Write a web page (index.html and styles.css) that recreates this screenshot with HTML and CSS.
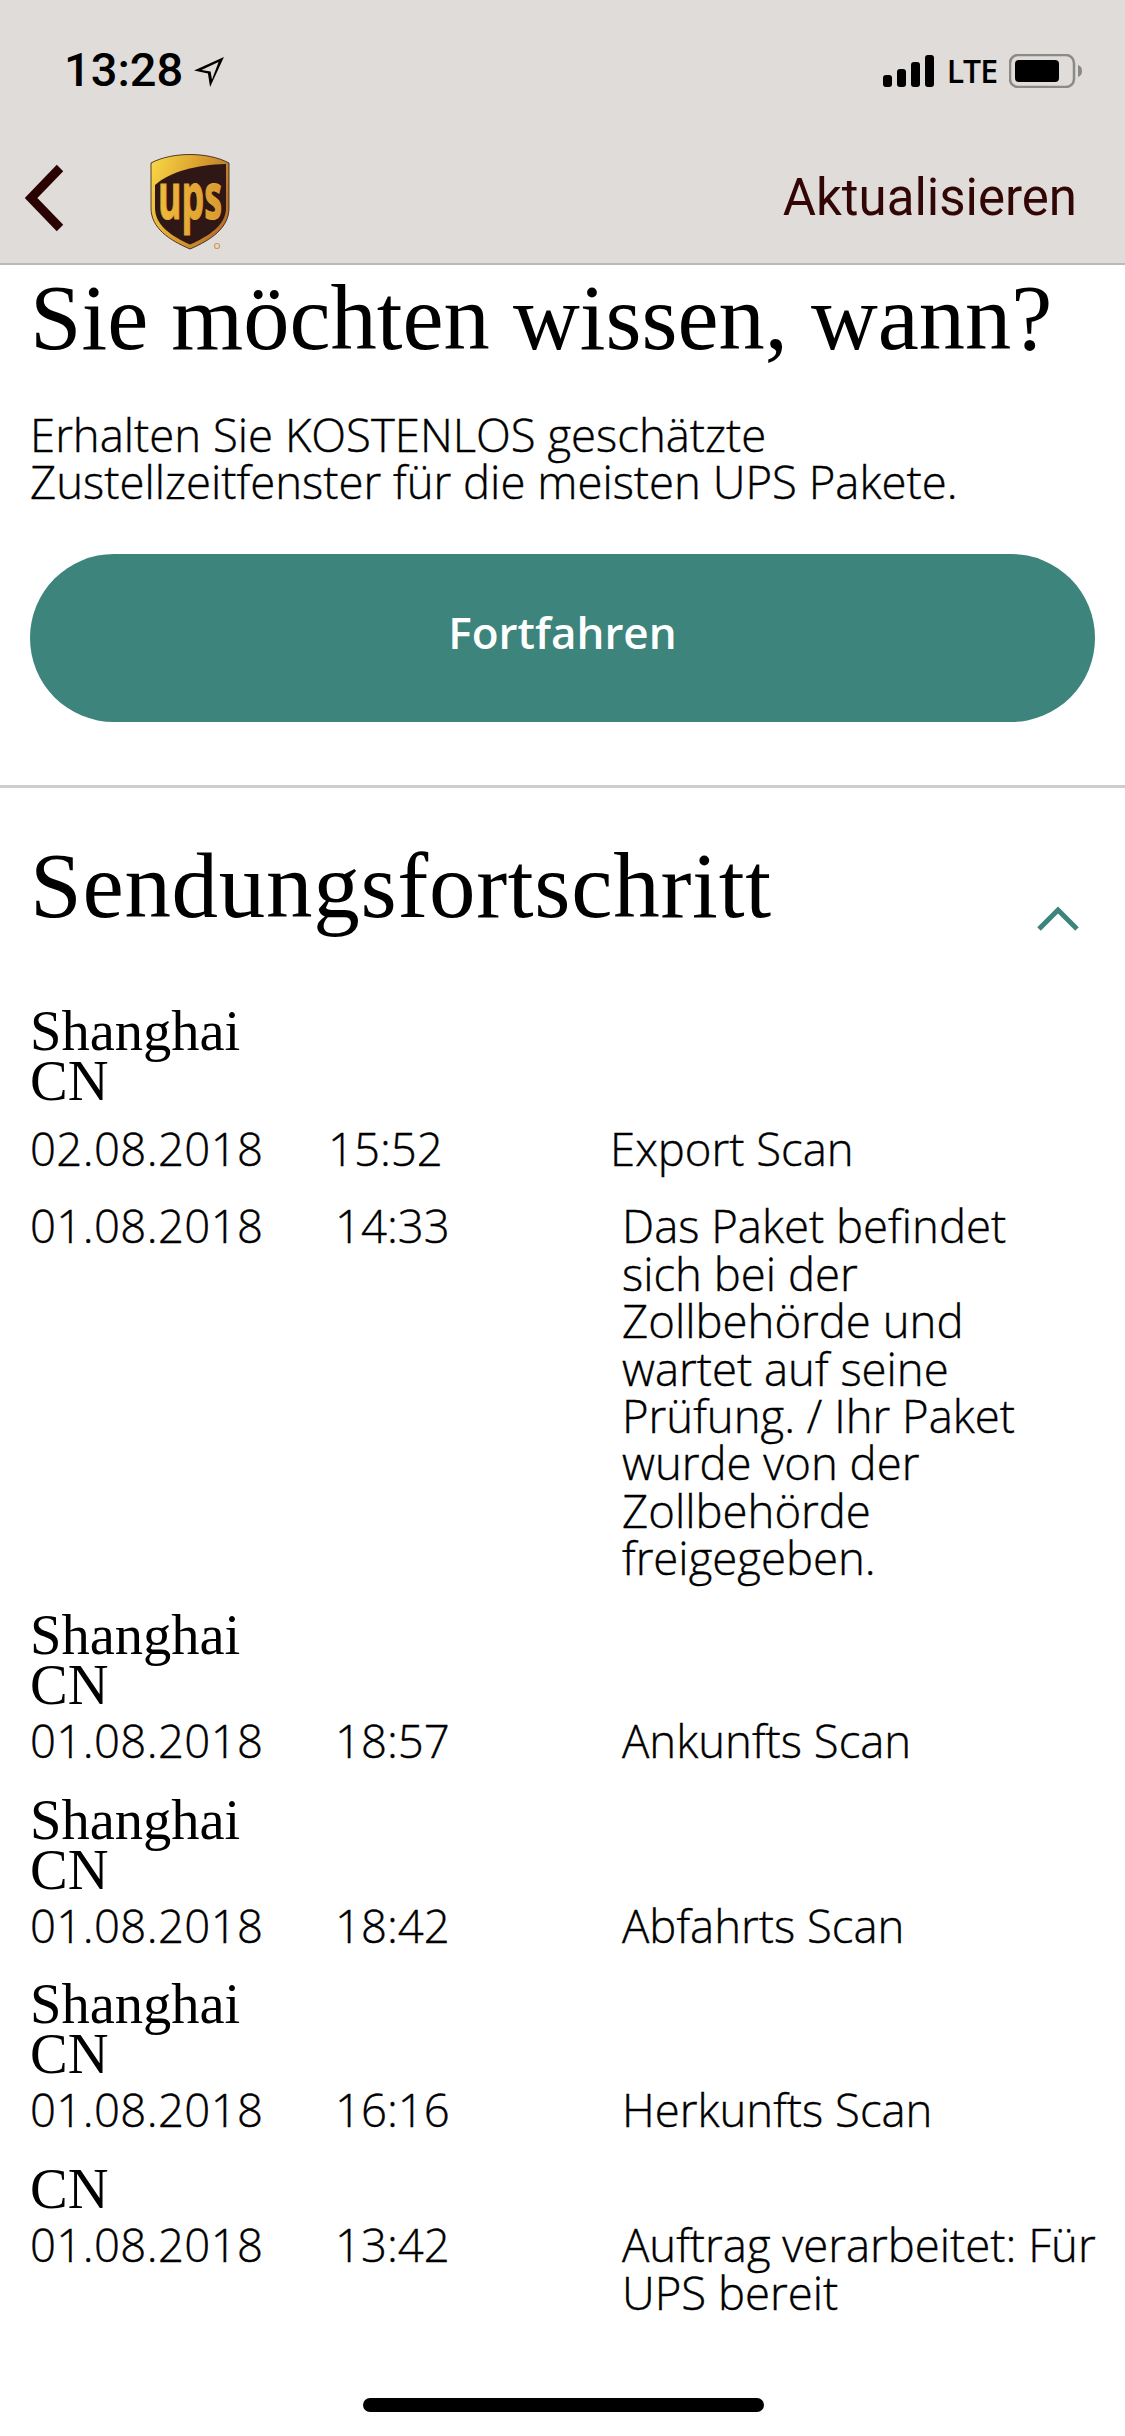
FILE: index.html
```html
<!DOCTYPE html>
<html lang="de">
<head>
  <meta charset="UTF-8" />
  <title>UPS Sendungsverfolgung</title>
  <link rel="stylesheet" href="styles.css">
</head>
<body>

  <header class="topbar">
    <div class="status">
      <div class="status-left">
        <span class="clock">13:28</span>
        <svg class="arrow" viewBox="0 0 30 32" width="32" height="32" preserveAspectRatio="none"><path d="M29 1 L1 14.500 L14 17.500 L16 31 Z M24 6 L8 14 L16.500 15.500 L17.800 23.500 Z" fill="#000" fill-rule="evenodd"/></svg>
      </div>
      <div class="status-right">
        <svg class="signal" viewBox="0 0 52 32" width="52" height="32">
          <rect x="0" y="20" width="9" height="12" rx="3"/>
          <rect x="14" y="14" width="9" height="18" rx="3"/>
          <rect x="28" y="7" width="9" height="25" rx="3"/>
          <rect x="42" y="0" width="9" height="32" rx="3"/>
        </svg>
        <span class="lte">LTE</span>
        <svg class="battery" viewBox="0 0 74 34" width="74" height="34">
          <rect x="1" y="1" width="64" height="32" rx="8" fill="none" stroke="#8a8a86" stroke-width="2.500"/>
          <rect x="6" y="6" width="44" height="22" rx="4" fill="#000"/>
          <path d="M69 11 C72 12 73 14 73 17 C73 20 72 22 69 23 Z" fill="#8a8a86"/>
        </svg>
      </div>
    </div>
    <nav class="navbar">
      <div class="nav-left">
        <svg class="back" viewBox="0 0 40 68" width="40" height="68"><path d="M35 4 L6 34 L35 64" fill="none" stroke="#2b0202" stroke-width="9"/></svg>
        <svg class="logo" viewBox="0 0 80 96" width="80" height="96">
          <defs>
            <linearGradient id="rim" x1="0" y1="0" x2="1" y2="0.400">
              <stop offset="0" stop-color="#fada47"/>
              <stop offset="0.550" stop-color="#dca12f"/>
              <stop offset="1" stop-color="#b8752a"/>
            </linearGradient>
            <linearGradient id="letters" x1="0" y1="0" x2="1" y2="0">
              <stop offset="0" stop-color="#f0bb3c"/>
              <stop offset="1" stop-color="#d99a32"/>
            </linearGradient>
          </defs>
          <path d="M1 9 C12 3 27 0.500 40 0.500 C53 0.500 68 3 79 9 V54 C79 74 61 86 40 95 C19 86 1 74 1 54 Z" fill="url(#rim)" stroke="#2a1410" stroke-width="0.800"/>
          <path d="M5 31 C21 17 46 11 76 10 V54 C76 71 59 82 40 90.500 C21 82 5 71 5 54 Z" fill="#2e1714"/>
          <text class="logo-text" x="40" y="65" text-anchor="middle" textLength="64" lengthAdjust="spacingAndGlyphs">ups</text>
          <circle cx="67" cy="92" r="2.500" fill="none" stroke="#cf9c5c" stroke-width="1.200"/>
        </svg>
      </div>
      <a class="refresh">Aktualisieren</a>
    </nav>
  </header>

  <main>
    <section class="promo">
      <h1>Sie möchten wissen, wann?</h1>
      <p>Erhalten Sie KOSTENLOS geschätzte<br>Zustellzeitfenster für die meisten UPS Pakete.</p>
      <button class="btn">Fortfahren</button>
    </section>

    <section class="progress">
      <div class="progress-head">
        <h2>Sendungsfortschritt</h2>
        <svg class="collapse" viewBox="0 0 44 26" width="44" height="26"><path d="M3 23 L22 4 L41 23" fill="none" stroke="#3d847c" stroke-width="5"/></svg>
      </div>

      <div class="place">Shanghai<br>CN</div>
      <div class="row row-first">
        <span class="date">02.08.2018</span><span>15:52</span><span>Export Scan</span>
      </div>
      <div class="row row-long">
        <span class="date">01.08.2018</span><span>14:33</span><span class="long-text">Das Paket befindet sich bei der Zollbehörde und wartet auf seine Prüfung. / Ihr Paket wurde von der Zollbehörde freigegeben.</span>
      </div>

      <div class="place">Shanghai<br>CN</div>
      <div class="row">
        <span class="date">01.08.2018</span><span>18:57</span><span>Ankunfts Scan</span>
      </div>

      <div class="place">Shanghai<br>CN</div>
      <div class="row">
        <span class="date">01.08.2018</span><span>18:42</span><span>Abfahrts Scan</span>
      </div>

      <div class="place">Shanghai<br>CN</div>
      <div class="row">
        <span class="date">01.08.2018</span><span>16:16</span><span>Herkunfts Scan</span>
      </div>

      <div class="place">CN</div>
      <div class="row">
        <span class="date">01.08.2018</span><span>13:42</span><span>Auftrag verarbeitet: Für UPS bereit</span>
      </div>
    </section>
  </main>

  <div class="home-bar"></div>

</body>
</html>
```

FILE: styles.css
```css
* {
  box-sizing: border-box;
}

html, body {
  margin: 0;
  padding: 0;
}

body {
  width: 1125px;
  height: 2436px;
  background: #ffffff;
  color: #000000;
  font-family: "Open Sans", sans-serif;
  overflow: hidden;
  position: relative;
}

.topbar {
  height: 265px;
  background: #dfdcd9;
  border-bottom: 2px solid #bcbab7;
}

.status {
  height: 132px;
  padding: 44px 42px 0 64px;
  display: flex;
  justify-content: space-between;
  align-items: flex-start;
}

.status-left {
  display: flex;
  align-items: center;
  gap: 10px;
}

.clock {
  font-family: Roboto, sans-serif;
  font-weight: 500;
  font-size: 47px;
  line-height: 52px;
}

.arrow {
  margin-top: 4px;
}

.status-right {
  display: flex;
  align-items: center;
  gap: 12px;
  padding-top: 10px;
}

.lte {
  font-size: 32px;
  line-height: 32px;
  font-weight: 600;
  letter-spacing: -1px;
}

.navbar {
  height: 131px;
  display: flex;
  justify-content: space-between;
  align-items: center;
  padding: 0 48px 0 25px;
}

.nav-left {
  display: flex;
  align-items: center;
  gap: 85px;
}

.back {
  display: block;
}

.logo {
  display: block;
  margin-top: 8px;
}

.logo-text {
  font-family: "Open Sans", sans-serif;
  font-weight: 700;
  font-size: 64px;
  fill: url(#letters);
  stroke: #e3a732;
  stroke-width: 1.200px;
}

.refresh {
  font-family: Roboto, sans-serif;
  font-size: 51px;
  color: #330606;
}

.promo {
  padding: 0 30px;
  height: 523px;
  border-bottom: 3px solid #cfcdca;
}

h1, h2 {
  font-family: "Liberation Serif", serif;
  font-weight: 400;
  margin: 0;
}

h1 {
  font-size: 92.500px;
  line-height: 100px;
  padding-top: 3px;
}

.promo p {
  margin: 43px 0 0;
  font-size: 45.500px;
  font-weight: 300;
  -webkit-text-stroke: 0.400px #000000;
  line-height: 47px;
}

.btn {
  display: block;
  width: 1065px;
  height: 168px;
  margin-top: 49px;
  padding-bottom: 14px;
  border: none;
  border-radius: 84px;
  background: #3d847c;
  color: #ffffff;
  font-family: "Open Sans", sans-serif;
  font-weight: 600;
  font-size: 44px;
}

.progress {
  padding: 0 30px;
}

.progress-head {
  display: flex;
  justify-content: space-between;
  align-items: flex-end;
  padding-top: 48px;
  margin-bottom: 70px;
}

h2 {
  font-size: 93px;
  letter-spacing: 0.700px;
  line-height: 100px;
}

.collapse {
  margin-right: 15px;
  margin-bottom: 4px;
}

.place {
  font-family: "Liberation Serif", serif;
  font-size: 56.500px;
  line-height: 50px;
}

.row {
  display: grid;
  grid-template-columns: 305px 287px 483px;
  font-size: 45.500px;
  font-weight: 300;
  -webkit-text-stroke: 0.400px #000000;
  line-height: 47.400px;
  margin: 7px 0 30.500px;
}

.date {
  letter-spacing: 0.400px;
}

.row-first {
  grid-template-columns: 298px 282px 483px;
  margin-top: 19px;
  margin-bottom: 30px;
}

.row-long {
  margin-top: 0;
  margin-bottom: 28px;
}

.long-text {
  padding-right: 30px;
}

.home-bar {
  position: absolute;
  left: 363px;
  bottom: 24px;
  width: 401px;
  height: 14px;
  border-radius: 7px;
  background: #000000;
}
```
